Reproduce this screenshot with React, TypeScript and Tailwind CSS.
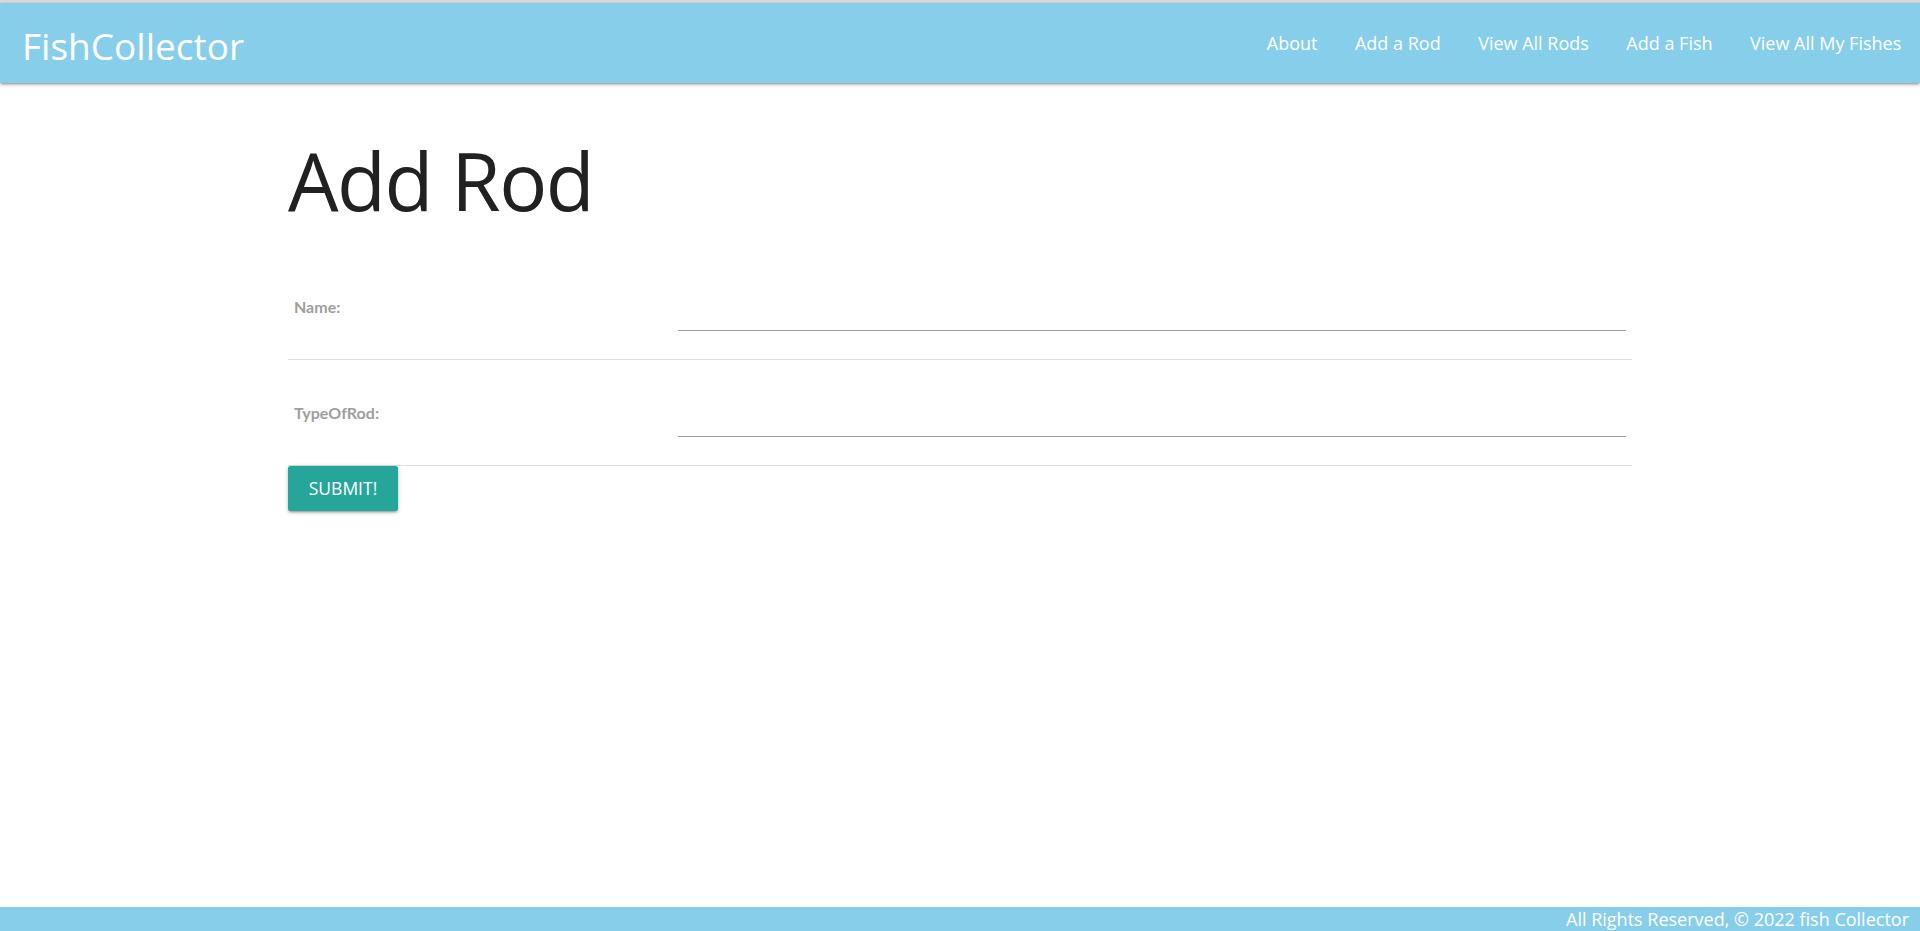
const navLinks = ["About", "Add a Rod", "View All Rods", "Add a Fish", "View All My Fishes"];

const fields = [
  { id: "id_name", label: "Name:" },
  { id: "id_typeOfRod", label: "TypeOfRod:" },
];

function Navbar() {
  return (
    <nav className="h-[80px] bg-[#87ceeb] flex items-center justify-between shadow-[0_2px_2px_0_rgba(0,0,0,0.14),0_3px_1px_-2px_rgba(0,0,0,0.12),0_1px_5px_0_rgba(0,0,0,0.2)] relative z-10">
      <a href="#" className="pl-[22px] pt-[4px] text-[37px] text-white leading-none">
        FishCollector
      </a>
      <ul className="flex h-full items-center">
        {navLinks.map((l) => (
          <li key={l} className="h-full">
            <a href="#" className="h-full flex items-center px-[18.75px] text-[18px] text-white">
              {l}
            </a>
          </li>
        ))}
      </ul>
    </nav>
  );
}

function FormRow({ id, label }: { id: string; label: string }) {
  return (
    <div className="flex items-center border-b border-[#e0e0e0] pt-[18px] pb-[18px]">
      <div className="w-[384px] px-[6px]">
        <label htmlFor={id} className="text-[16px] font-bold text-[#9e9e9e] font-['Lato',sans-serif]">
          {label}
        </label>
      </div>
      <div className="flex-1 px-[6px]">
        <input
          id={id}
          type="text"
          className="w-full h-[59px] mb-[10px] border-b border-[#9e9e9e] outline-none bg-transparent text-[20px]"
        />
      </div>
    </div>
  );
}

export default function App() {
  return (
    <div className="min-h-screen flex flex-col border-t-[3px] border-[#dcdcdc] font-['Open_Sans','Noto_Sans',sans-serif] text-[#212121]">
      <Navbar />
      <main className="flex-1">
        <div className="w-[1344px] mx-auto">
          <h1 className="mt-[51px] mb-[28px] text-[80px] leading-[92px] tracking-[-1.5px] font-normal">Add Rod</h1>
          <form>
            {fields.map((f) => (
              <FormRow key={f.id} {...f} />
            ))}
            <button
              type="submit"
              className="h-[45px] w-[110px] bg-[#26a69a] text-white text-[17.5px] uppercase rounded-[2.5px] shadow-[0_2px_2px_0_rgba(0,0,0,0.14),0_3px_1px_-2px_rgba(0,0,0,0.12),0_1px_5px_0_rgba(0,0,0,0.2)]"
            >
              Submit!
            </button>
          </form>
        </div>
      </main>
      <footer className="h-[24px] bg-[#87ceeb] overflow-hidden text-right pr-[11px] text-white text-[18px] leading-[24px]">
        All Rights Reserved, © 2022 fish Collector
      </footer>
    </div>
  );
}
